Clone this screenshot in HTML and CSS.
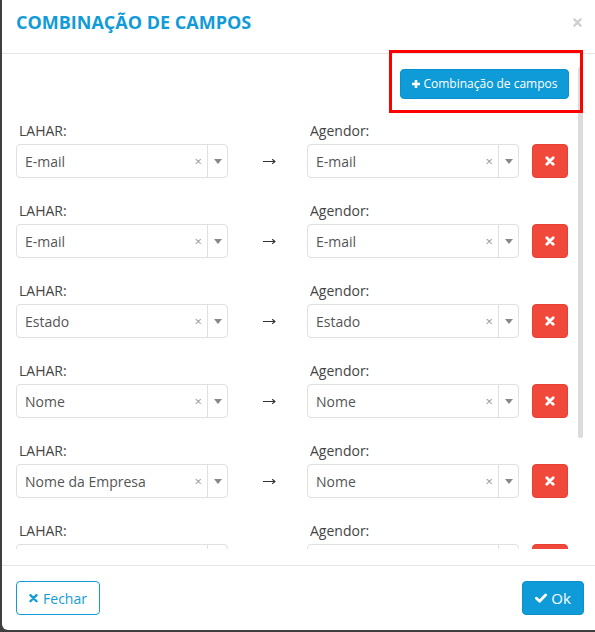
FILE: index.html
```html
<!DOCTYPE html>
<html lang="pt-BR">
<head>
<meta charset="utf-8">
<title>Combinação de campos</title>
<link rel="stylesheet" href="styles.css">
</head>
<body>
<div class="modal">
  <div class="modal-header">
    <h4 class="modal-title">COMBINAÇÃO DE CAMPOS</h4>
    <button class="close" type="button" aria-label="Fechar">
      <svg viewBox="0 0 10 10" width="9" height="9"><path d="M1.6 1.6L8.4 8.4M8.4 1.6L1.6 8.4" stroke="currentColor" stroke-width="2.6" stroke-linecap="round"/></svg>
    </button>
  </div>
  <div class="modal-body">
    <div class="scroll">
      <div class="toolbar">
        <button class="btn btn-add" type="button">
          <svg viewBox="0 0 10 10" width="10" height="10"><path d="M5 1V9M1 5H9" stroke="currentColor" stroke-width="2.6"/></svg>
          Combinação de campos
        </button>
      </div>

      <div class="row">
        <div class="field"><label>LAHAR:</label><div class="select"><span class="value">E-mail</span><span class="clear">×</span><span class="caret"><i></i></span></div></div>
        <div class="arrow"><svg viewBox="0 0 13 7" width="13" height="7"><path d="M0 3.5H12M9.2 1.2L12 3.5L9.2 5.8" fill="none" stroke="#333" stroke-width="1.1"/></svg></div>
        <div class="field"><label>Agendor:</label><div class="select"><span class="value">E-mail</span><span class="clear">×</span><span class="caret"><i></i></span></div></div>
        <button class="btn btn-del" type="button"><svg viewBox="0 0 10 10" width="10" height="10"><path d="M1.8 1.8L8.2 8.2M8.2 1.8L1.8 8.2" stroke="currentColor" stroke-width="2.8" stroke-linecap="round"/></svg></button>
      </div>

      <div class="row">
        <div class="field"><label>LAHAR:</label><div class="select"><span class="value">E-mail</span><span class="clear">×</span><span class="caret"><i></i></span></div></div>
        <div class="arrow"><svg viewBox="0 0 13 7" width="13" height="7"><path d="M0 3.5H12M9.2 1.2L12 3.5L9.2 5.8" fill="none" stroke="#333" stroke-width="1.1"/></svg></div>
        <div class="field"><label>Agendor:</label><div class="select"><span class="value">E-mail</span><span class="clear">×</span><span class="caret"><i></i></span></div></div>
        <button class="btn btn-del" type="button"><svg viewBox="0 0 10 10" width="10" height="10"><path d="M1.8 1.8L8.2 8.2M8.2 1.8L1.8 8.2" stroke="currentColor" stroke-width="2.8" stroke-linecap="round"/></svg></button>
      </div>

      <div class="row">
        <div class="field"><label>LAHAR:</label><div class="select"><span class="value">Estado</span><span class="clear">×</span><span class="caret"><i></i></span></div></div>
        <div class="arrow"><svg viewBox="0 0 13 7" width="13" height="7"><path d="M0 3.5H12M9.2 1.2L12 3.5L9.2 5.8" fill="none" stroke="#333" stroke-width="1.1"/></svg></div>
        <div class="field"><label>Agendor:</label><div class="select"><span class="value">Estado</span><span class="clear">×</span><span class="caret"><i></i></span></div></div>
        <button class="btn btn-del" type="button"><svg viewBox="0 0 10 10" width="10" height="10"><path d="M1.8 1.8L8.2 8.2M8.2 1.8L1.8 8.2" stroke="currentColor" stroke-width="2.8" stroke-linecap="round"/></svg></button>
      </div>

      <div class="row">
        <div class="field"><label>LAHAR:</label><div class="select"><span class="value">Nome</span><span class="clear">×</span><span class="caret"><i></i></span></div></div>
        <div class="arrow"><svg viewBox="0 0 13 7" width="13" height="7"><path d="M0 3.5H12M9.2 1.2L12 3.5L9.2 5.8" fill="none" stroke="#333" stroke-width="1.1"/></svg></div>
        <div class="field"><label>Agendor:</label><div class="select"><span class="value">Nome</span><span class="clear">×</span><span class="caret"><i></i></span></div></div>
        <button class="btn btn-del" type="button"><svg viewBox="0 0 10 10" width="10" height="10"><path d="M1.8 1.8L8.2 8.2M8.2 1.8L1.8 8.2" stroke="currentColor" stroke-width="2.8" stroke-linecap="round"/></svg></button>
      </div>

      <div class="row">
        <div class="field"><label>LAHAR:</label><div class="select"><span class="value">Nome da Empresa</span><span class="clear">×</span><span class="caret"><i></i></span></div></div>
        <div class="arrow"><svg viewBox="0 0 13 7" width="13" height="7"><path d="M0 3.5H12M9.2 1.2L12 3.5L9.2 5.8" fill="none" stroke="#333" stroke-width="1.1"/></svg></div>
        <div class="field"><label>Agendor:</label><div class="select"><span class="value">Nome</span><span class="clear">×</span><span class="caret"><i></i></span></div></div>
        <button class="btn btn-del" type="button"><svg viewBox="0 0 10 10" width="10" height="10"><path d="M1.8 1.8L8.2 8.2M8.2 1.8L1.8 8.2" stroke="currentColor" stroke-width="2.8" stroke-linecap="round"/></svg></button>
      </div>

      <div class="row">
        <div class="field"><label>LAHAR:</label><div class="select"><span class="value"></span><span class="caret"></span></div></div>
        <div class="arrow"></div>
        <div class="field"><label>Agendor:</label><div class="select"><span class="value"></span><span class="caret"></span></div></div>
        <button class="btn btn-del" type="button"></button>
      </div>
    </div>
    <div class="scroll-thumb"></div>
  </div>
  <div class="modal-footer">
    <button class="btn btn-close" type="button">
      <svg viewBox="0 0 10 10" width="9" height="10"><path d="M1.6 1.8L8.4 8.6M8.4 1.8L1.6 8.6" stroke="currentColor" stroke-width="2.6" stroke-linecap="round"/></svg>
      Fechar
    </button>
    <button class="btn btn-ok" type="button">
      <svg viewBox="0 0 12 10" width="12" height="10"><path d="M1.4 5.2L4.6 8.2L10.6 2" fill="none" stroke="currentColor" stroke-width="2.8" stroke-linecap="round" stroke-linejoin="round"/></svg>
      Ok
    </button>
  </div>
  <div class="highlight"></div>
</div>
</body>
</html>
```

FILE: styles.css
```css
* { box-sizing: border-box; }

html, body {
  margin: 0;
  padding: 0;
  height: 100%;
}

body {
  background: #3f3f3f;
  font-family: "Open Sans", "Liberation Sans", sans-serif;
  color: #444;
  overflow: hidden;
}

.modal {
  position: relative;
  margin-left: 2px;
  width: 593px;
  height: 630px;
  background: #fff;
  border-bottom-left-radius: 6px;
  display: flex;
  flex-direction: column;
  overflow: hidden;
}

.modal-header {
  height: 54px;
  flex: none;
  border-bottom: 1px solid #e5e5e5;
  display: flex;
  align-items: center;
  justify-content: space-between;
  padding: 0 13px 10px 14px;
}

.modal-title {
  margin: 0;
  font-size: 18px;
  font-weight: 700;
  color: #119bd8;
  letter-spacing: 0;
}

.close {
  border: 0;
  background: none;
  padding: 0;
  margin-top: 1px;
  color: #cfcfcf;
  display: flex;
}

.modal-body {
  position: relative;
  flex: 1;
  padding: 15px 0 16px 14px;
}

.scroll {
  height: 480px;
  overflow: hidden;
}

.scroll-thumb {
  position: absolute;
  top: 13px;
  right: 12px;
  width: 5px;
  height: 371px;
  background: #dcdcdc;
  border-radius: 2px;
}

.toolbar {
  display: flex;
  justify-content: flex-end;
  padding-right: 26px;
  margin-bottom: 22px;
}

.btn {
  font-family: "Open Sans", "Liberation Sans", sans-serif;
  border-radius: 4px;
  display: inline-flex;
  align-items: center;
  justify-content: center;
  cursor: pointer;
}

.btn-add {
  height: 30px;
  width: 169px;
  background: #0f9bd7;
  border: 1px solid #0b90c9;
  color: #fff;
  font-size: 12px;
  gap: 2px;
  padding: 0 10px 1px 10px;
}

.row {
  display: flex;
  align-items: flex-end;
  margin-bottom: 23px;
}

.field {
  width: 212px;
  display: flex;
  flex-direction: column;
}

.field label {
  font-size: 14px;
  line-height: 20px;
  margin-bottom: 3px;
  padding-left: 3px;
  color: #444;
}

.select {
  height: 34px;
  border: 1px solid #e0e0e0;
  border-radius: 4px;
  display: flex;
  align-items: center;
  background: #fff;
}

.value {
  flex: 1;
  padding-left: 8px;
  font-size: 14px;
  color: #555;
  white-space: nowrap;
}

.clear {
  font-size: 13px;
  color: #999;
  margin-right: 5px;
  line-height: 1;
}

.caret {
  width: 20px;
  height: 100%;
  border-left: 1px solid #e0e0e0;
  display: flex;
  align-items: center;
  justify-content: center;
}

.caret i {
  width: 0;
  height: 0;
  border-left: 4px solid transparent;
  border-right: 4px solid transparent;
  border-top: 5px solid #888;
  margin-top: 1px;
}

.arrow {
  width: 79px;
  height: 34px;
  display: flex;
  align-items: center;
  justify-content: center;
  padding-left: 3px;
  padding-top: 1px;
}

.btn-del {
  width: 36px;
  height: 34px;
  margin-left: 13px;
  background: #f0493b;
  border: 1px solid #e83f31;
  color: #fff;
  padding: 0;
}

.modal-footer {
  height: 65px;
  flex: none;
  border-top: 1px solid #e5e5e5;
  display: flex;
  align-items: center;
  justify-content: space-between;
  padding: 0 11px 0 14px;
}

.btn-close {
  width: 84px;
  height: 34px;
  background: #fff;
  border: 1px solid #119bd8;
  color: #119bd8;
  font-size: 14px;
  gap: 5px;
  padding: 0;
}

.btn-ok {
  width: 62px;
  height: 34px;
  background: #0f9bd7;
  border: 1px solid #0b90c9;
  color: #fff;
  font-size: 15px;
  gap: 4px;
  padding: 0;
}

.highlight {
  position: absolute;
  left: 387px;
  top: 50px;
  width: 194px;
  height: 63px;
  border: 3px solid #ff0000;
  pointer-events: none;
}
```
